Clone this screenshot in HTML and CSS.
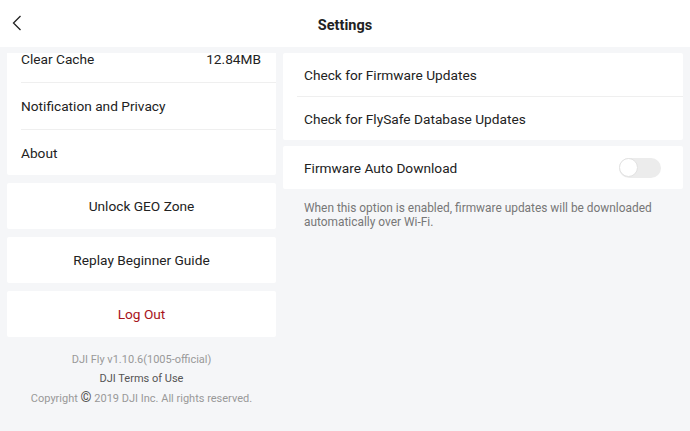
FILE: index.html
```html
<!DOCTYPE html>
<html lang="en">
<head>
  <title>Settings</title>
  <meta charset="UTF-8">
  <meta name="viewport" content="width=device-width, initial-scale=1.0">
  <link rel="stylesheet" href="styles.css">
</head>
<body>
  <div class="topbar">
    <div class="back">
      <svg width="10" height="16" viewBox="0 0 10 16"><path d="M8.5 1 L1.5 8 L8.5 15" fill="none" stroke="#222" stroke-width="1.3"/></svg>
    </div>
    <div class="title">Settings</div>
  </div>

  <div class="main">
    <div class="col-left">
      <div class="card list scrolled">
        <div class="row"><span>Clear Cache</span><span>12.84MB</span></div>
        <div class="row"><span>Notification and Privacy</span></div>
        <div class="row"><span>About</span></div>
      </div>
      <div class="card button">Unlock GEO Zone</div>
      <div class="card button">Replay Beginner Guide</div>
      <div class="card button danger">Log Out</div>
      <div class="footer">
        <div class="version">DJI Fly v1.10.6(1005-official)</div>
        <div class="terms">DJI Terms of Use</div>
        <div class="copy">Copyright <span class="c-mark">©</span> 2019 DJI Inc. All rights reserved.</div>
      </div>
    </div>

    <div class="col-right">
      <div class="card list">
        <div class="row short"><span>Check for Firmware Updates</span></div>
        <div class="row short"><span>Check for FlySafe Database Updates</span></div>
      </div>
      <div class="card list second">
        <div class="row short">
          <span>Firmware Auto Download</span>
          <div class="toggle"><div class="knob"></div></div>
        </div>
      </div>
      <p class="hint">When this option is enabled, firmware updates will be downloaded automatically over Wi-Fi.</p>
    </div>
  </div>
</body>
</html>
```

FILE: styles.css
```css
body {
  margin: 0;
  background-color: #f5f6f8;
  font-family: Roboto, 'Liberation Sans', Arial, sans-serif;
  color: #222;
  font-size: 13.7px;
}
.topbar {
  height: 47px;
  box-sizing: border-box;
  padding-top: 3px;
  background: #fff;
  position: relative;
  display: flex;
  align-items: center;
  justify-content: center;
}
.back {
  position: absolute;
  left: 12px;
  top: 15px;
}
.title {
  font-size: 14.5px;
  font-weight: bold;
  color: #222;
}
.main {
  display: flex;
  gap: 7px;
  padding: 6px 7px 0;
  height: 378px;
  overflow: hidden;
}
.col-left {
  width: 269px;
  overflow: hidden; /* list is scrolled down a little */
}
.col-right {
  flex: 1;
}
.card {
  background: #fff;
  border-radius: 2px;
}
.scrolled {
  margin-top: -17px;
}
.row {
  height: 46px;
  margin-left: 14px;
  padding-right: 15px;
  border-bottom: 1px solid #efefef;
  display: flex;
  align-items: center;
  justify-content: space-between;
}
.row:last-child {
  border-bottom: none;
}
.scrolled .row:last-child {
  height: 45px;
}
.row.short {
  height: 43px;
  padding-left: 7px;
  padding-right: 22px;
}
.button {
  height: 46px;
  margin-top: 8px;
  display: flex;
  align-items: center;
  justify-content: center;
}
.danger {
  color: #a8131b;
}
.second {
  margin-top: 6px;
}
.toggle {
  width: 42px;
  height: 20px;
  border-radius: 10px;
  background: #ececec;
  display: flex;
  align-items: center;
}
.knob {
  width: 19px;
  height: 19px;
  border-radius: 50%;
  background: #fff;
  border: 1px solid #e2e2e2;
  box-sizing: border-box;
}
.hint {
  margin: 12px 0 0;
  padding: 0 21px;
  font-size: 11.9px;
  line-height: 14px;
  color: #777;
}
.footer {
  margin-top: 14px;
  text-align: center;
  font-size: 11px;
  line-height: 18.5px;
  color: #999;
}
.terms {
  color: #555;
}
.c-mark {
  font-weight: bold;
  font-size: 14px;
  color: #555;
}
```
